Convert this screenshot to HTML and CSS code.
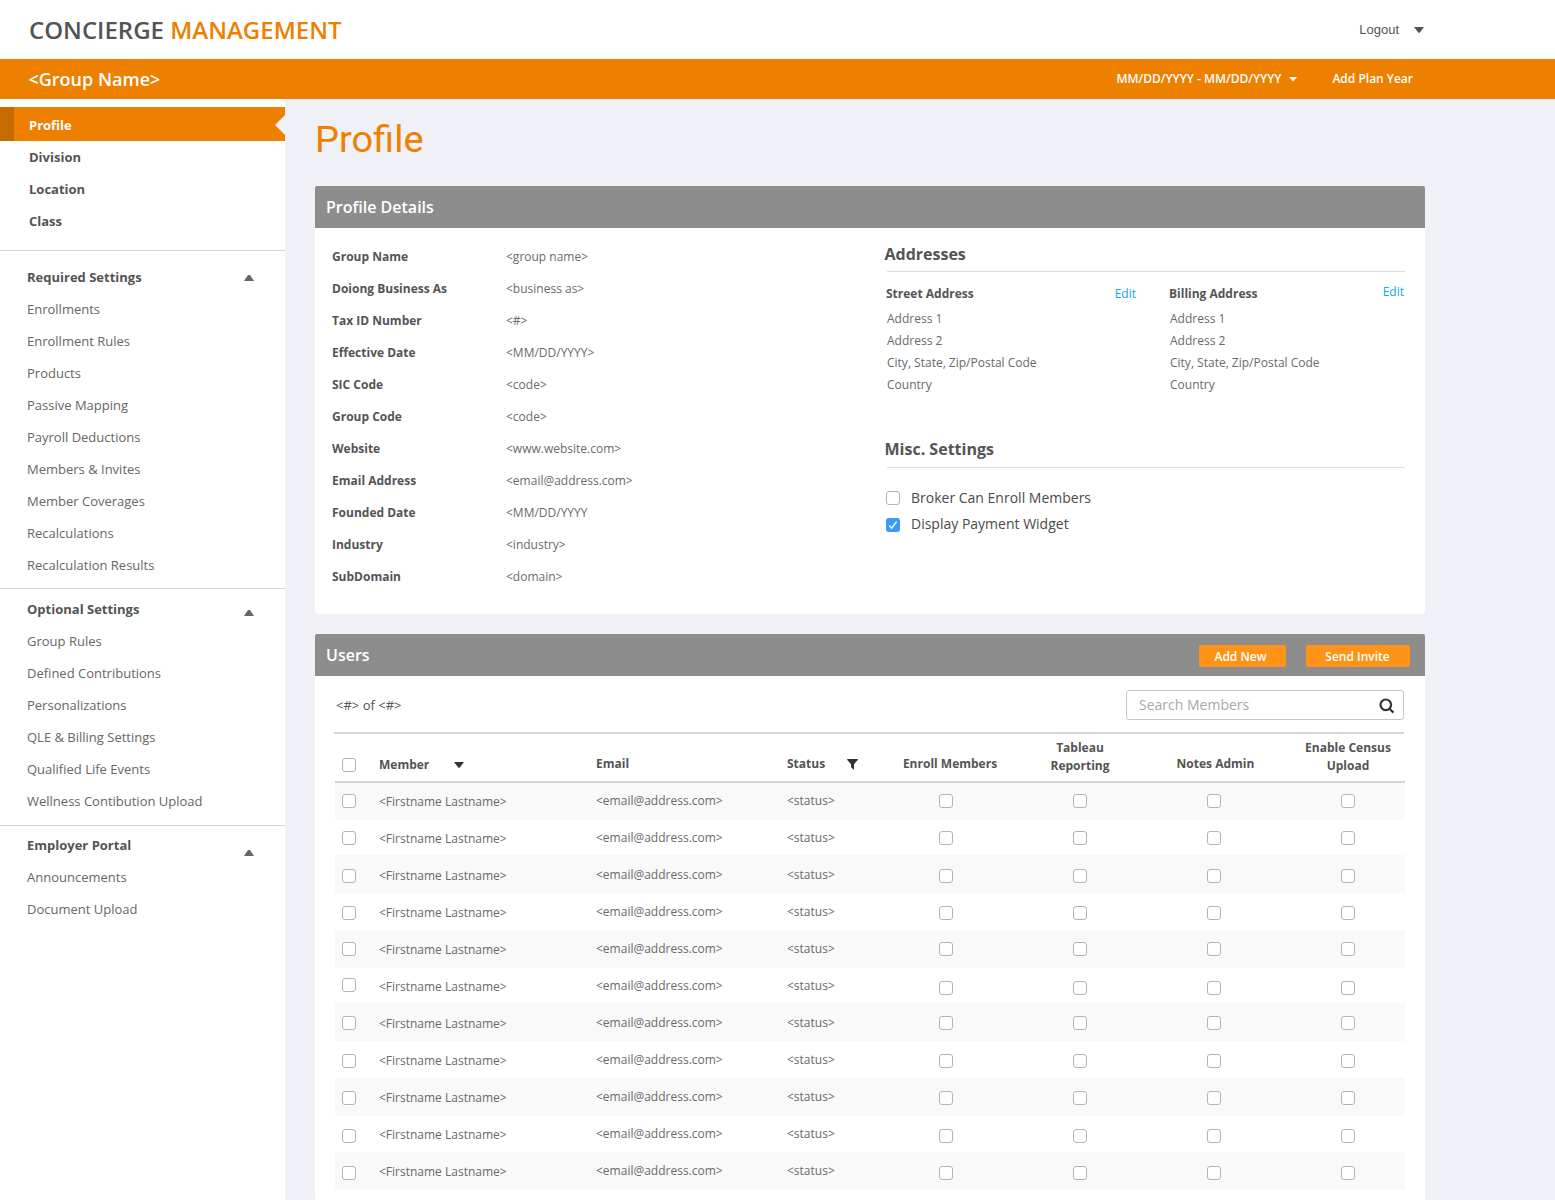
FILE: index.html
```html
<!DOCTYPE html>
<html lang="en">
<head>
    <meta charset="UTF-8">
    <title>Concierge Management</title>
    <link rel="stylesheet" href="styles.css">
</head>
<body>
    <header class="top">
        <h1 class="brand">CONCIERGE <span>MANAGEMENT</span></h1>
        <a class="logout">Logout <svg class="caret" width="10" height="6" viewBox="0 0 10 6"><path d="M0 0h10L5.8 5.4q-.8.8-1.6 0z"/></svg></a>
    </header>

    <div class="group-bar">
        <h2 class="group-name">&lt;Group Name&gt;</h2>
        <a class="plan-year">MM/DD/YYYY - MM/DD/YYYY <svg class="caret" width="8" height="5" viewBox="0 0 8 5"><path d="M0 0h8L4 4.6z"/></svg></a>
        <a class="add-plan">Add Plan Year</a>
    </div>

    <div class="page">
        <nav class="sidebar">
            <ul class="main-menu">
                <li class="active">Profile</li>
                <li>Division</li>
                <li>Location</li>
                <li>Class</li>
            </ul>

            <ul class="menu required">
                <li class="menu-title">Required Settings <i class="up"></i></li>
                <li>Enrollments</li>
                <li>Enrollment Rules</li>
                <li>Products</li>
                <li>Passive Mapping</li>
                <li>Payroll Deductions</li>
                <li>Members &amp; Invites</li>
                <li>Member Coverages</li>
                <li>Recalculations</li>
                <li>Recalculation Results</li>
            </ul>

            <ul class="menu optional">
                <li class="menu-title">Optional Settings <i class="up"></i></li>
                <li>Group Rules</li>
                <li>Defined Contributions</li>
                <li>Personalizations</li>
                <li>QLE &amp; Billing Settings</li>
                <li>Qualified Life Events</li>
                <li>Wellness Contibution Upload</li>
            </ul>

            <ul class="menu employer">
                <li class="menu-title">Employer Portal <i class="up"></i></li>
                <li>Announcements</li>
                <li>Document Upload</li>
            </ul>
        </nav>

        <main class="content">
            <h2 class="page-title">Profile</h2>

            <section class="panel profile">
                <div class="panel-head"><h3>Profile Details</h3></div>
                <div class="panel-body">
                    <dl class="details">
                        <dt>Group Name</dt><dd>&lt;group name&gt;</dd>
                        <dt>Doiong Business As</dt><dd>&lt;business as&gt;</dd>
                        <dt>Tax ID Number</dt><dd>&lt;#&gt;</dd>
                        <dt>Effective Date</dt><dd>&lt;MM/DD/YYYY&gt;</dd>
                        <dt>SIC Code</dt><dd>&lt;code&gt;</dd>
                        <dt>Group Code</dt><dd>&lt;code&gt;</dd>
                        <dt>Website</dt><dd>&lt;www.website.com&gt;</dd>
                        <dt>Email Address</dt><dd>&lt;email@address.com&gt;</dd>
                        <dt>Founded Date</dt><dd>&lt;MM/DD/YYYY</dd>
                        <dt>Industry</dt><dd>&lt;industry&gt;</dd>
                        <dt>SubDomain</dt><dd>&lt;domain&gt;</dd>
                    </dl>

                    <div class="side">
                        <h4>Addresses</h4>
                        <div class="addresses">
                            <div class="address">
                                <div class="address-head"><b>Street Address</b><a class="edit">Edit</a></div>
                                <p>Address 1</p>
                                <p>Address 2</p>
                                <p>City, State, Zip/Postal Code</p>
                                <p>Country</p>
                            </div>
                            <div class="address billing">
                                <div class="address-head"><b>Billing Address</b><a class="edit">Edit</a></div>
                                <p>Address 1</p>
                                <p>Address 2</p>
                                <p>City, State, Zip/Postal Code</p>
                                <p>Country</p>
                            </div>
                        </div>

                        <h4 class="misc">Misc. Settings</h4>
                        <div class="options">
                            <label><span class="box"></span>Broker Can Enroll Members</label>
                            <label><span class="box checked"><svg width="14" height="14" viewBox="0 0 14 14"><path d="M3.3 7.6l2.4 2.6L10.6 3.6"/></svg></span>Display Payment Widget</label>
                        </div>
                    </div>
                </div>
            </section>

            <section class="panel users">
                <div class="panel-head">
                    <h3>Users</h3>
                    <button class="btn add">Add New</button>
                    <button class="btn send">Send Invite</button>
                </div>
                <div class="toolbar">
                    <span class="count">&lt;#&gt; of &lt;#&gt;</span>
                    <div class="search">
                        <span>Search Members</span>
                        <svg width="16" height="16" viewBox="0 0 16 16"><circle cx="6.8" cy="6.8" r="5.3"/><path d="M10.6 10.8l3.8 3.8"/></svg>
                    </div>
                </div>
                <div class="row head">
                    <div class="pick"><span class="box"></span></div>
                    <div class="member">Member <svg class="caret" width="10" height="6" viewBox="0 0 10 6"><path d="M0 0h10L5.8 5.4q-.8.8-1.6 0z"/></svg></div>
                    <div>Email</div>
                    <div class="status">Status <svg class="caret" width="11" height="11" viewBox="0 0 11 11"><path d="M.4 0h10.2q.5.4.1 1L7 5.200V10.700L4 8.300V5.200L.3 1q-.4-.6.1-1z"/></svg></div>
                    <div class="center enroll">Enroll Members</div>
                    <div class="center tall">Tableau<br>Reporting</div>
                    <div class="center notes">Notes Admin</div>
                    <div class="center tall">Enable Census<br>Upload</div>
                </div>
                <div class="rows" id="rows"></div>
            </section>
        </main>
    </div>

    <script>
    // Fill the users list
    const rows = document.getElementById('rows');
    for (let i = 0; i < 11; i++) {
        rows.innerHTML += `
            <div class="row">
                <div class="pick"><span class="box"></span></div>
                <div class="member">&lt;Firstname Lastname&gt;</div>
                <div>&lt;email@address.com&gt;</div>
                <div>&lt;status&gt;</div>
                <div class="flag"><span class="box"></span></div>
                <div class="flag"><span class="box"></span></div>
                <div class="flag"><span class="box"></span></div>
                <div class="flag"><span class="box"></span></div>
            </div>`;
    }
    </script>
</body>
</html>
```
FILE: styles.css
```css
* {
    box-sizing: border-box;
    margin: 0;
    padding: 0;
}
body {
    height: 1200px;
    overflow: hidden;
    display: flex;
    flex-direction: column;
    font-family: "Open Sans", sans-serif;
    font-size: 12px;
    color: #545454;
    background-color: #f0f1f7;
}
ul {
    list-style-type: none;
}
svg {
    display: block;
    flex: none;
}
.caret {
    fill: currentColor;
}

/* header */
.top {
    flex: none;
    display: flex;
    justify-content: space-between;
    align-items: center;
    height: 59px;
    padding: 0 131px 0 29px;
    background-color: #fff;
}
.brand {
    font-size: 24px;
    font-weight: 600;
    line-height: 59px;
}
.brand span {
    color: #ee8000;
}
.logout {
    display: flex;
    align-items: center;
    gap: 15px;
    font-family: "Liberation Sans", Arial, sans-serif;
    font-size: 13px;
}
.group-bar {
    flex: none;
    display: flex;
    align-items: center;
    height: 40px;
    padding: 0 142px 0 28.5px;
    color: #fff;
    background-color: #ee8000;
    font-weight: 600;
}
.group-name {
    flex: 1;
    font-size: 18px;
    font-weight: 600;
}
.plan-year {
    display: flex;
    align-items: center;
    gap: 8px;
    margin-right: 35px;
}
.plan-year,
.add-plan {
    padding-bottom: 1px;
}
.plan-year .caret {
    margin-top: 2px;
}

/* sidebar */
.page {
    flex: 1;
    display: flex;
    min-height: 0;
}
.sidebar {
    flex: none;
    width: 285px;
    padding-top: 8px;
    background-color: #fff;
    font-size: 13px;
}
.sidebar li {
    height: 32px;
    line-height: 32px;
    padding-left: 27px;
}
.menu li {
    color: #666;
}
.main-menu {
    height: 144px;
    border-bottom: 1px solid #d5d5d5;
}
.main-menu li {
    padding-left: 29px;
    font-weight: 700;
}
.main-menu li.active {
    position: relative;
    height: 34px;
    line-height: 36px;
    padding-left: 15px;
    color: #fff;
    background-color: #ee8000;
    border-left: 14px solid #c76b00;
}
.active::after {
    content: "";
    position: absolute;
    right: 0;
    top: 8px;
    border: 10px solid transparent;
    border-left: 0;
    border-right-color: #f0f1f7;
}
.menu .menu-title {
    display: flex;
    justify-content: space-between;
    padding-right: 31px;
    color: #545454;
    font-weight: 700;
}
.up {
    width: 10px;
    height: 6px;
    margin-top: 14px;
    background-color: #666;
    clip-path: polygon(40% 0, 60% 0, 100% 100%, 0 100%);
}
.required {
    height: 338px;
    padding-top: 10px;
    border-bottom: 1px solid #d5d5d5;
}
.optional {
    height: 237px;
    padding-top: 4px;
    border-bottom: 1px solid #d5d5d5;
}
.optional .up {
    margin-top: 17px;
}
.employer {
    padding-top: 3px;
}
.employer .up {
    margin-top: 21px;
}

/* content */
.content {
    display: flex;
    flex-direction: column;
    width: 1110px;
    margin-left: 30px;
}
.page-title {
    flex: none;
    height: 87px;
    line-height: 82px;
    font-family: Roboto, sans-serif;
    font-size: 36px;
    font-weight: 400;
    color: #ee8000;
    transform: scaleX(1.055);
    transform-origin: left;
}
.panel {
    flex: none;
    background-color: #fff;
    border-radius: 2px;
    overflow: hidden;
}
.panel-head {
    display: flex;
    align-items: center;
    height: 42px;
    padding: 0 15px 0 11px;
    color: #fff;
    background-color: #8d8d8d;
}
.panel-head h3 {
    flex: 1;
    font-size: 16px;
    font-weight: 600;
}
.profile {
    height: 428px;
    margin-bottom: 20px;
}
.panel-body {
    display: flex;
    padding: 0 20px 0 17px;
}
.details {
    display: grid;
    grid-template-columns: 174px 380px;
    grid-auto-rows: 32px;
    padding-top: 13px;
    line-height: 32px;
}
.details dt {
    font-weight: 700;
}
.details dd,
.address p {
    color: #6a6a6a;
}
.side {
    flex: 1;
}
.side h4 {
    height: 44px;
    padding-top: 10px;
    margin-left: 1px;
    border-bottom: 1px solid #ddd;
    font-size: 16px;
    font-weight: 700;
    line-height: 32px;
    text-indent: -2.5px;
}
.addresses {
    display: flex;
    height: 161px;
    padding-top: 12px;
}
.address {
    width: 250px;
    margin-right: 33px;
}
.address.billing {
    width: 235px;
    margin-right: 0;
}
.address-head {
    display: flex;
    justify-content: space-between;
    height: 24px;
    line-height: 20px;
}
.address p {
    line-height: 22px;
    padding-left: 1px;
}
.edit {
    color: #12a5f0;
}
.billing .edit {
    margin-top: -2px;
}
.side h4.misc {
    height: 35px;
    padding-top: 0;
}
.options {
    padding-top: 17px;
}
.options label {
    display: flex;
    gap: 11px;
    height: 26px;
    line-height: 26px;
    color: #4a4a4a;
    font-size: 14px;
}
.options .box {
    margin-top: 6px;
}
.options .box.checked {
    margin-top: 7px;
}
.box {
    display: block;
    flex: none;
    width: 14px;
    height: 14px;
    border: 1px solid #b4b4b4;
    border-radius: 3px;
    background-color: #fff;
}
.box.checked {
    border: 0;
    background-color: #3b99fc;
}
.checked path {
    fill: none;
    stroke: #fff;
    stroke-width: 1.5;
}

/* users */
.users {
    flex: 1;
}
.btn {
    height: 22px;
    margin-top: 2px;
    border: 0;
    border-radius: 2px;
    color: #fff;
    background-color: #ff9318;
    font: 600 12px "Open Sans", sans-serif;
}
.btn.add {
    width: 87px;
    padding-right: 4px;
    margin-right: 20px;
}
.btn.send {
    width: 104px;
    padding-right: 1px;
}
.toolbar {
    display: flex;
    justify-content: space-between;
    align-items: center;
    height: 58px;
    margin: 0 21px 0 19px;
    padding-left: 2px;
    border-bottom: 2px solid #d5d5d5;
}
.count {
    padding-top: 2px;
    font-size: 13px;
}
.search {
    display: flex;
    justify-content: space-between;
    align-items: center;
    width: 278px;
    height: 30px;
    margin-top: 2px;
    padding: 0 8px 0 12px;
    border: 1px solid #c6c6c6;
    border-radius: 3px;
    color: #a8a8a8;
    font-size: 14px;
}
.search span {
    padding-bottom: 1px;
}
.search svg {
    fill: none;
    stroke: #333;
    stroke-width: 2.2;
    margin-top: 2px;
}
.row {
    display: grid;
    grid-template-columns: 44px 217px 191px 92px repeat(4, 134px);
    width: 1070px;
    height: var(--height);
    margin-left: 20px;
    color: #6a6a6a;
    line-height: 18px;
}
.row > div {
    padding-top: var(--text);
}
.row > .member {
    padding-top: calc(var(--text) + 1px);
}
.row > .pick {
    padding: var(--pick) 0 0 7px;
}
.row > .flag {
    padding: var(--flag, var(--pick)) 0 0 60px;
}
.row.head {
    --height: 49px;
    --text: 21px;
    --pick: 24px;
    color: #545454;
    border-bottom: 2px solid #d5d5d5;
    font-weight: 700;
}
.head .member,
.head .status {
    display: flex;
    gap: 25px;
}
.head .status {
    gap: 22px;
}
.head .caret {
    color: #333;
    margin-top: 6px;
}
.head .status .caret {
    margin-top: 4px;
}
.head .center {
    text-align: center;
}
.head .enroll {
    padding-left: 8px;
}
.head .notes {
    padding-left: 3px;
}
.head > .tall {
    padding-top: 5px;
}
.rows .row:nth-child(odd) {
    background-color: #f9f9f9;
}
.rows .row:nth-child(1) { --height: 37px; --text: 9px; --pick: 11px; }
.rows .row:nth-child(2) { --height: 35px; --text: 9px; --pick: 11px; }
.rows .row:nth-child(3) { --height: 38px; --text: 11px; --pick: 14px; }
.rows .row:nth-child(4) { --height: 37px; --text: 10px; --pick: 13px; }
.rows .row:nth-child(5) { --height: 38px; --text: 10px; --pick: 12px; }
.rows .row:nth-child(6) { --height: 35px; --text: 9px; --pick: 10px; --flag: 13px; }
.rows .row:nth-child(7) { --height: 38px; --text: 11px; --pick: 13px; }
.rows .row:nth-child(8) { --height: 37px; --text: 10px; --pick: 13px; }
.rows .row:nth-child(9) { --height: 38px; --text: 10px; --pick: 13px; }
.rows .row:nth-child(10) { --height: 36px; --text: 9px; --pick: 13px; }
.rows .row:nth-child(11) { --height: 38px; --text: 10px; --pick: 14px; }
```
